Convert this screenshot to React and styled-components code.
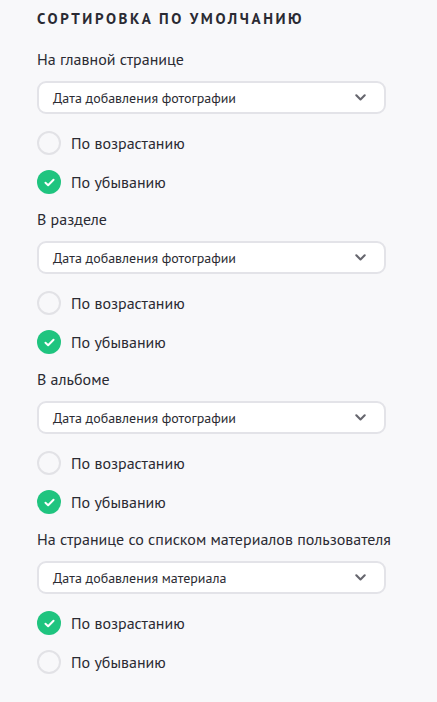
import React from 'react'
import styled, { createGlobalStyle } from 'styled-components'

const Global = createGlobalStyle`
  html, body {
    margin: 0;
    padding: 0;
    background: #f8f8fa;
  }
  body {
    font-family: "PT Sans", "Noto Sans", "Open Sans", sans-serif;
    color: #2b2b33;
  }
`

const sections = [
  { title: 'На главной странице', value: 'Дата добавления фотографии', asc: false },
  { title: 'В разделе', value: 'Дата добавления фотографии', asc: false },
  { title: 'В альбоме', value: 'Дата добавления фотографии', asc: false },
  { title: 'На странице со списком материалов пользователя', value: 'Дата добавления материала', asc: true },
]

export default function App() {
  return (
    <>
      <Global />
      <Page>
        <Heading>Сортировка по умолчанию</Heading>
        {sections.map((s, i) => (
          <Section key={i}>
            <Label>{s.title}</Label>
            <Select>
              <SelectText>{s.value}</SelectText>
              <Chevron viewBox="0 0 11 7" width="11" height="7">
                <path d="M1.3 1.3 L5.5 5.5 L9.7 1.3" fill="none" stroke="#66666e" strokeWidth="2.1" strokeLinecap="round" strokeLinejoin="round" />
              </Chevron>
            </Select>
            <Options>
              <Radio checked={s.asc} text="По возрастанию" />
              <Radio checked={!s.asc} text="По убыванию" />
            </Options>
          </Section>
        ))}
      </Page>
    </>
  )
}

const Radio = ({ checked, text }) => (
  <Row>
    <Circle $checked={checked}>
      {checked && (
        <svg viewBox="0 0 12 10" width="11" height="9">
          <path d="M1.5 5.2 L4.5 8 L10.5 2" fill="none" stroke="#fff" strokeWidth="2.2" strokeLinecap="round" strokeLinejoin="round" />
        </svg>
      )}
    </Circle>
    <RowText>{text}</RowText>
  </Row>
)

const Page = styled.div`
  width: 437px;
  min-height: 702px;
  box-sizing: border-box;
  padding: 9px 20px 20px 37px;
`

const Heading = styled.h2`
  margin: 0 0 19px;
  font-size: 15px;
  line-height: 20px;
  font-weight: 700;
  letter-spacing: 2.6px;
  text-transform: uppercase;
  color: #2a2a33;
`

const Section = styled.div`
  display: flex;
  flex-direction: column;
  margin-bottom: 14px;
`

const Label = styled.div`
  font-size: 16px;
  line-height: 22px;
  margin-bottom: 11px;
  white-space: nowrap;
`

const Select = styled.div`
  width: 349px;
  height: 33px;
  box-sizing: border-box;
  border: 2px solid #e3e3e8;
  border-radius: 9px;
  background: #fff;
  display: flex;
  align-items: center;
  justify-content: space-between;
  padding: 0 18px 0 14px;
`

const SelectText = styled.span`
  font-size: 14px;
  color: #2b2b33;
`

const Chevron = styled.svg`
  display: block;
`

const Options = styled.div`
  display: flex;
  flex-direction: column;
  gap: 15px;
  margin-top: 17px;
`

const Row = styled.div`
  display: flex;
  align-items: center;
  gap: 10px;
  height: 24px;
`

const Circle = styled.span`
  width: 24px;
  height: 24px;
  box-sizing: border-box;
  border-radius: 50%;
  border: ${p => (p.$checked ? 'none' : '2px solid #e2e2e6')};
  background: ${p => (p.$checked ? '#1fc47f' : '#f8f8fa')};
  display: flex;
  align-items: center;
  justify-content: center;
  flex-shrink: 0;
`

const RowText = styled.span`
  font-size: 16px;
  color: #2b2b33;
`
